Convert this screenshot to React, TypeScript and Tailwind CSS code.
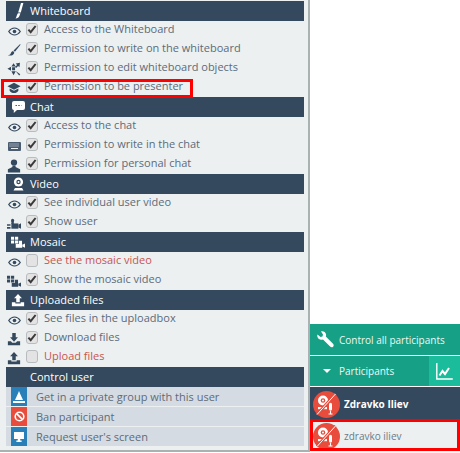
import React from "react";

type IP = { c?: string };
const S = ({ children, w = 14, h = 14, c = "#34495e" }: { children: React.ReactNode; w?: number; h?: number; c?: string }) => (
  <svg width={w} height={h} viewBox="0 0 16 16" fill={c} className="shrink-0">{children}</svg>
);

const Eye = ({ c }: IP) => (
  <svg width="13" height="9" viewBox="0 0 13 9" className="shrink-0" fill="none" stroke={c ?? "#34495e"}>
    <path d="M.7 4.500C2.500 2 4.400 1 6.500 1s4 1 5.800 3.500C10.500 7 8.600 8 6.500 8S2.500 7 .7 4.500Z" strokeWidth="1.200" />
    <circle cx="6.500" cy="4.500" r="1.800" fill={c ?? "#34495e"} stroke="none" />
  </svg>
);
const Brush = ({ c }: IP) => (
  <S c={c}><path d="M15 1 7.500 8.500l1.600 1.600L15.400 2Z" /><path d="M7 9.200C4.800 9.200 4.800 12 3.500 13c-.8.600-1.600.8-2.500 1 3 .9 6.500.4 7.400-3Z" /></S>
);
const Pen = ({ c }: IP) => (
  <S c={c} w={16} h={16}><path d="M11 0h2.400l-2.600 9.500H8.200Z" /><path d="M7.900 10.300h2.500L9.400 13c-.4 1.300-2 2.200-3.900 2.600 1.200-1.400 1-3.400 2.400-5.300Z" /></S>
);
const Move = ({ c }: IP) => (
  <S c={c}>
    <path d="M5.800 6h3.400v3.400H5.800Z" />
    <path d="M7.500 1.500 10 5H5ZM7.500 15 5 10.600h5ZM.5 7.700 4.600 5.300v4.800ZM9.800 10.200l5.400 3.800-1.300 1.400-4.100-5.200ZM14.800 .8l-.6 5.200-1.500-1.500-2.300 2.300-1.200-1.200 2.300-2.300L10 1.800Z" />
  </S>
);
const Cap = ({ c }: IP) => (
  <S c={c}><path d="M8 2 15.500 6 8 10 .5 6Z" /><path d="M3 8.600 8 11.200l5-2.600V11c-1 1.800-3 2.800-5 2.800S4 12.800 3 11Z" /></S>
);
const Keyboard = ({ c }: IP) => (
  <svg width="13" height="9" viewBox="0 0 13 9" className="shrink-0">
    <rect width="13" height="9" rx="1" fill={c ?? "#4a5d70"} />
    <path d="M1.500 2h10M1.500 4h10" stroke="#ecf0f1" strokeDasharray="1 1" />
    <path d="M3 6.500h7" stroke="#ecf0f1" />
  </svg>
);
const User = ({ c }: IP) => (
  <S c={c} h={15}><circle cx="8" cy="4.600" r="3.600" /><path d="M6.200 8.400h3.600v1.400l5.200 2.400V16H1v-3.800l5.200-2.400Z" /></S>
);
const Cam = ({ c }: IP) => (
  <S c={c}><rect x="5" y="8.500" width="8" height="6" /><path d="m13 10 3-1.600v6.200L13 13ZM0 9.500h4V11H0ZM0 12.500h4V14.500H0ZM5 5.600h2.800V9H5Z" /><circle cx="6.400" cy="5" r="1.800" /></S>
);
const Mosaic = ({ c }: IP) => (
  <S c={c}>
    <path d="M0 2h3.600v3.400H0ZM4.600 2h3.600v3.400H4.600ZM0 6.400h3.600v3.400H0ZM4.600 6.400h3.600v3.400H4.600Z" />
    <rect x="5.400" y="10.200" width="7.400" height="4.400" /><path d="M9 6.600h3.600v3.600H9ZM13 11l3-1.400v5L13 13.200Z" />
  </S>
);
const Upload = ({ c }: IP) => (
  <S c={c}><path d="M8 1 12.500 6H10v4.500H6V6H3.500Z" /><path d="M1 10.500h4v1.400h6v-1.400h4V15H1Z" /></S>
);
const Download = ({ c }: IP) => (
  <S c={c}><path d="M6 1h4v5h2.500L8 11 3.500 6H6Z" /><path d="M1 10.500h3.400L6 12.300h4l1.600-1.800H15V15H1Z" /></S>
);
const Bubble = () => (
  <svg width="13" height="12" viewBox="0 0 13 12" className="shrink-0">
    <path d="M2 0h9a2 2 0 0 1 2 2v5a2 2 0 0 1-2 2H5l-3.200 3V9A2 2 0 0 1 0 7V2a2 2 0 0 1 2-2Z" fill="#fff" />
    <path d="M3.500 4.500h6" stroke="#34495e" strokeDasharray="1.400 1.400" />
  </svg>
);
const Webcam = () => (
  <svg width="11" height="14" viewBox="0 0 11 14" className="shrink-0">
    <circle cx="5.500" cy="5" r="4.600" fill="#fff" />
    <circle cx="5.500" cy="5" r="2.200" fill="#34495e" />
    <circle cx="5.500" cy="5" r="1" fill="#fff" />
    <path d="M2 11h7l1.500 2.500h-10Z" fill="#fff" />
  </svg>
);
const Check = () => (
  <svg width="10" height="9" viewBox="0 0 10 9" className="block">
    <path d="M1.400 4.600 3.700 7.200 8.600 1" fill="none" stroke="#3a3a3a" strokeWidth="2" />
  </svg>
);

const Box = ({ on }: { on: boolean }) => (
  <span className="flex h-[13px] w-[12px] shrink-0 -translate-y-[1px] items-center justify-center rounded-[3px] border border-[#b9bcbe] bg-[#e3e3e3]">
    {on && <Check />}
  </span>
);

const Row = ({ icon, label, on = true }: { icon: React.ReactNode; label: string; on?: boolean }) => (
  <div className="flex h-[19px] items-center">
    <span className="flex w-[26px] shrink-0 items-center justify-center pl-[2px] pt-[1px]">{icon}</span>
    <Box on={on} />
    <span className={`ml-[6px] -translate-y-[1px] text-[11px] ${on ? "text-[#5c6b7a]" : "text-[#c9544f]"}`}>{label}</span>
  </div>
);

const Head = ({ icon, label }: { icon?: React.ReactNode; label: string }) => (
  <div className="ml-[6px] mr-[4px] flex h-[20px] items-center bg-[#34495e]">
    <span className="flex w-[24px] shrink-0 items-center justify-center">{icon}</span>
    <span className="pt-[1px] text-[11px] font-[500] text-white">{label}</span>
  </div>
);

const Action = ({ bg, icon, label }: { bg: string; icon: React.ReactNode; label: string }) => (
  <div className="ml-[6px] mr-[4px] mb-[1px] flex h-[19px] items-center bg-[#d5dbe2]">
    <span className={`ml-[5px] flex h-[19px] w-[16px] items-center justify-center ${bg}`}>{icon}</span>
    <span className="ml-[9px] pt-[1px] text-[11px] text-[#5c6b7a]">{label}</span>
  </div>
);

const Avatar = () => (
  <span className="mt-[2px] flex h-[27px] w-[27px] shrink-0 items-center justify-center rounded-full bg-[#e74c3c]">
    <svg width="27" height="27" viewBox="0 0 27 27">
      <circle cx="10" cy="9.500" r="5" fill="#fff" />
      <circle cx="10" cy="9.500" r="2.300" fill="#e74c3c" />
      <circle cx="10" cy="9.500" r="1" fill="#fff" />
      <path d="M5 16h9v2.200H5Z" fill="#fff" />
      <path d="M16 13.500c0-1 .6-1.700 1.500-1.700s1.500.7 1.500 1.700v4.500c0 1-.6 1.700-1.500 1.700S16 19 16 18Z" fill="#fff" />
      <path d="M17.500 20v2.500M15.500 23h4" stroke="#fff" strokeWidth="1.100" />
      <path d="M4 23.500 22.500 3" stroke="#e74c3c" strokeWidth="3" />
      <path d="M4 23.500 22.500 3" stroke="#fff" strokeWidth="1" />
    </svg>
  </span>
);

export default function App() {
  return (
    <div className="flex h-[453px] w-[460px] overflow-hidden bg-white" style={{ fontFamily: '"Open Sans", sans-serif' }}>
      <div className="relative h-[452px] w-[310px] shrink-0 border-r-2 border-b-2 border-[#a9b1b3] bg-[#ecf0f1] pt-[1px]">
        <Head icon={<Pen c="#fff" />} label="Whiteboard" />
        <Row icon={<Eye />} label="Access to the Whiteboard" />
        <Row icon={<Brush />} label="Permission to write on the whiteboard" />
        <Row icon={<Move />} label="Permission to edit whiteboard objects" />
        <Row icon={<Cap />} label="Permission to be presenter" />
        <Head icon={<Bubble />} label="Chat" />
        <Row icon={<Eye />} label="Access to the chat" />
        <Row icon={<Keyboard />} label="Permission to write in the chat" />
        <Row icon={<User />} label="Permission for personal chat" />
        <Head icon={<Webcam />} label="Video" />
        <Row icon={<Eye />} label="See individual user video" />
        <Row icon={<Cam />} label="Show user" />
        <Head icon={<Mosaic c="#fff" />} label="Mosaic" />
        <Row icon={<Eye />} label="See the mosaic video" on={false} />
        <Row icon={<Mosaic />} label="Show the mosaic video" />
        <Head icon={<Upload c="#fff" />} label="Uploaded files" />
        <Row icon={<Eye />} label="See files in the uploadbox" />
        <Row icon={<Download />} label="Download files" />
        <Row icon={<Upload />} label="Upload files" on={false} />
        <Head label="Control user" />
        <Action
          bg="bg-[#2980b9]"
          label="Get in a private group with this user"
          icon={
            <svg width="12" height="12" viewBox="0 0 12 12">
              <path d="M6 0 7 2.400 10 9H2l3-6.600ZM0 10h12v2H0Z" fill="#fff" />
            </svg>
          }
        />
        <Action
          bg="bg-[#e74c3c]"
          label="Ban participant"
          icon={
            <svg width="11" height="11" viewBox="0 0 11 11" fill="none" stroke="#fff" strokeWidth="1.600">
              <circle cx="5.500" cy="5.500" r="4.300" />
              <path d="M2.600 2.600 8.400 8.400" />
            </svg>
          }
        />
        <Action
          bg="bg-[#2980b9]"
          label="Request user's screen"
          icon={
            <svg width="10" height="10" viewBox="0 0 10 10" fill="#fff">
              <path d="M0 0h10v7H0ZM3.800 7h2.400v1.600h1.400V10H2.400V8.600h1.400Z" />
            </svg>
          }
        />
        <div className="absolute left-[1px] top-[79px] h-[19px] w-[192px] border-[3px] border-[#f00]" />
      </div>

      <div className="flex min-w-0 flex-1 flex-col pt-[324px]">
        <div className="flex h-[32px] items-center border-b border-white bg-[#16a085] pl-[7px] text-[#ecf9f5]">
          <svg width="17" height="17" viewBox="0 0 17 17" className="shrink-0" fill="#fff">
            <path d="M4 .4C6.200-.3 8.500 1 9 3.200c.2.900.1 1.500-.2 2.400l7.200 7.200c.9.900.9 2 .1 2.900-.9.900-2.100.8-3-.1L6 8.500c-2.400.8-4.700-.1-5.500-2.400C.2 5.200.2 4.300.5 3.400L3.500 6l2-.5L6 3.500Z" />
          </svg>
          <span className="ml-[5px] whitespace-nowrap pt-[1px] text-[10px] font-medium">Control all participants</span>
        </div>
        <div className="flex h-[31px] items-stretch border-b border-white bg-[#16a085] text-[#ecf9f5]">
          <div className="flex flex-1 items-center pl-[13px]">
            <span className="h-0 w-0 border-x-[4px] border-t-[4px] border-x-transparent border-t-white" />
            <span className="ml-[8px] pt-[1px] text-[10px] font-medium">Participants</span>
          </div>
          <div className="flex w-[31px] items-center justify-center bg-[#1abc9c]">
            <svg width="17" height="17" viewBox="0 0 17 17" fill="none" stroke="#fff">
              <path d="M.8 0v16h16" strokeWidth="1.400" />
              <path d="M3.500 12.500 6.500 8l2.500 3 4-6" strokeWidth="2" />
            </svg>
          </div>
        </div>
        <div className="flex h-[32px] items-center bg-[#34495e] pl-[3px]">
          <Avatar />
          <span className="ml-[4px] pt-[2px] text-[10px] font-bold text-white">Zdravko Iliev</span>
        </div>
        <div className="relative flex h-[32px] items-center bg-[#ecf0f1] pl-[3px]">
          <Avatar />
          <span className="ml-[4px] pt-[2px] text-[10px] text-[#6b7a88]">zdravko iliev</span>
          <div className="absolute inset-0 border-[3px] border-[#f00]" />
        </div>
      </div>
    </div>
  );
}
